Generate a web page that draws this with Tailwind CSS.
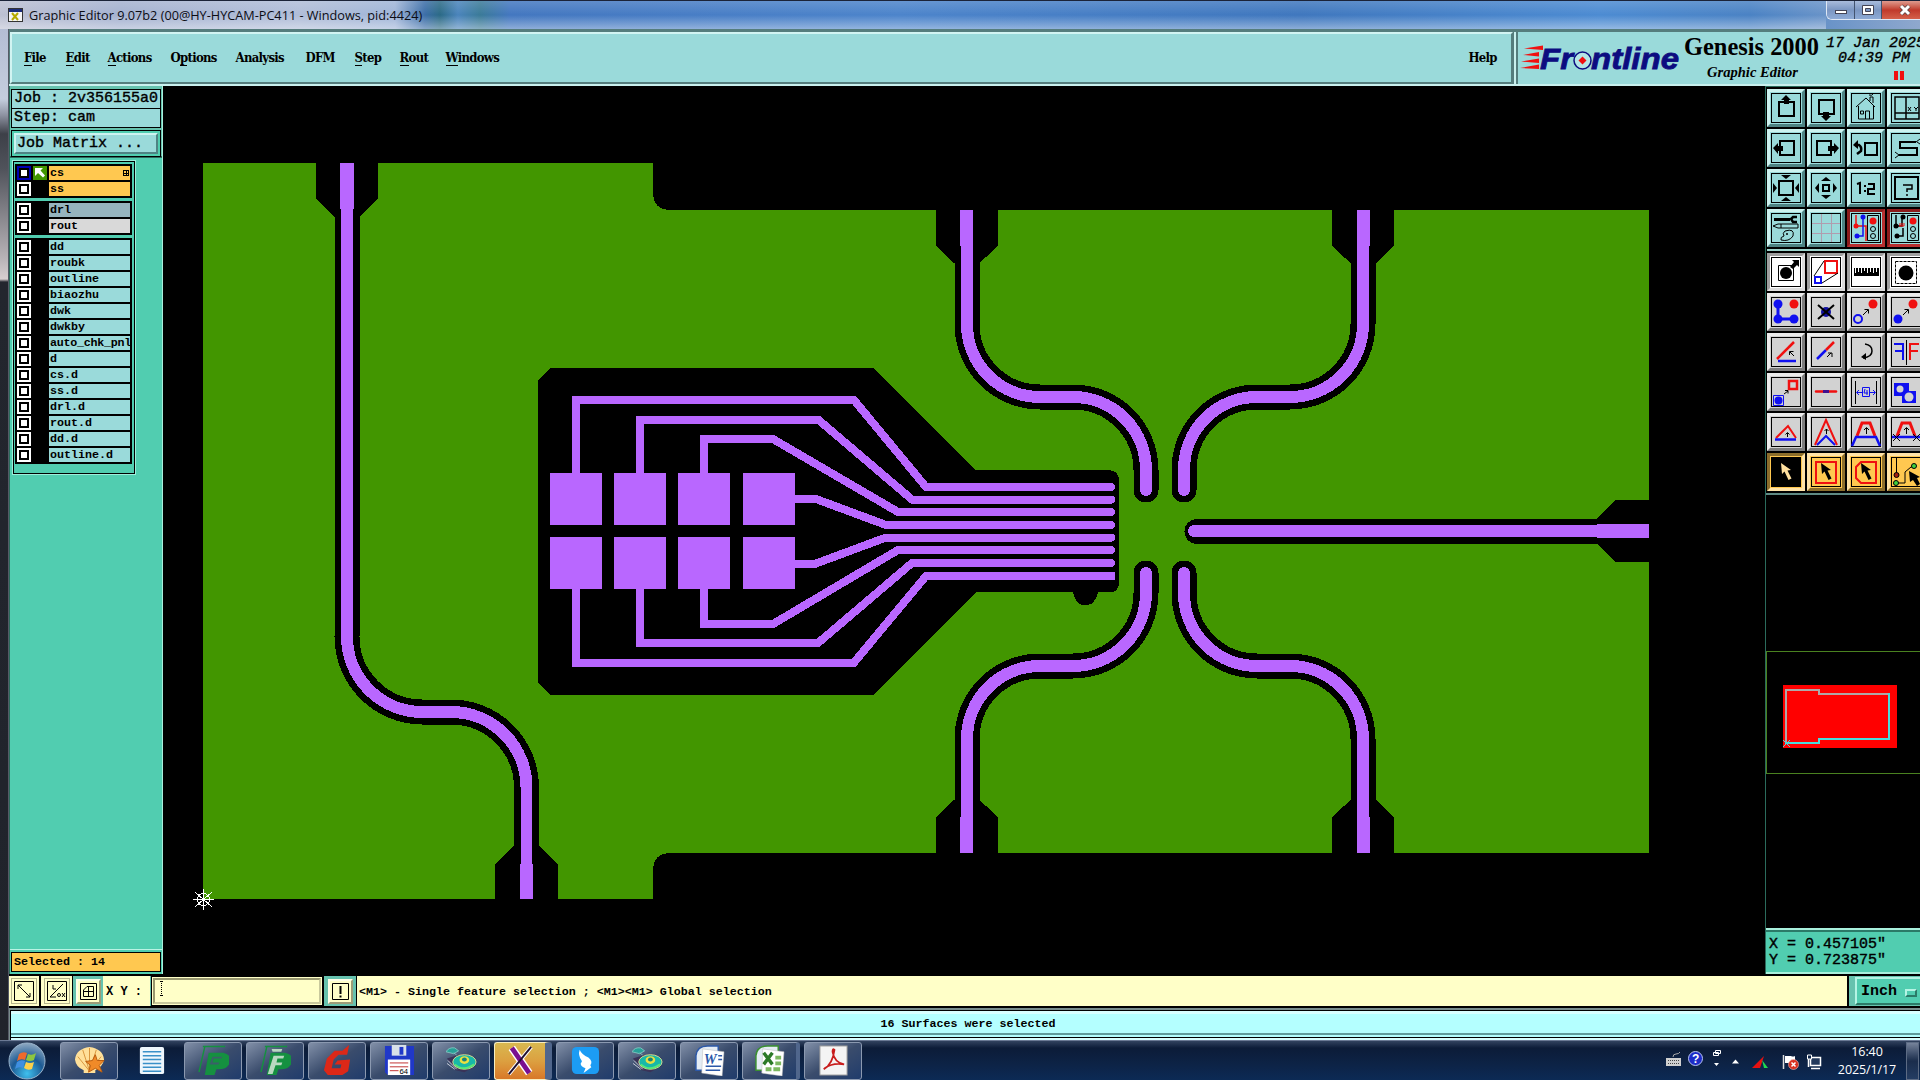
<!DOCTYPE html>
<html lang="en">
<head>
<meta charset="utf-8">
<title>Graphic Editor 9.07b2</title>
<script src="https://cdn.jsdelivr.net/npm/@tailwindcss/browser@4"></script>
</head>
<body class="w-[1920px] h-[1080px] overflow-hidden bg-black text-black flex flex-col">

<!-- title bar -->
<header class="h-[29px] shrink-0 flex items-start border-t border-[#1b2338] bg-[linear-gradient(90deg,#bcc0d2_0px,#a5b2d0_120px,#b0bdd8_300px,#a0b5d8_395px,#3c6ea8_425px,#2b6a86_440px,#4a84bc_458px,#3a7a98_480px,#4377c0_510px,#4c84cb_900px,#3f77be_1300px,#4c8bd2_1600px,#4a82c4_1750px,#8fa8cd_1920px)]">
  <div class="h-full flex-1 flex items-center pl-[8px] gap-[6px] bg-linear-to-b from-white/15 via-white/0 to-white/40">
    <svg class="w-[15px] h-[15px] shrink-0" viewBox="0 0 15 15"><rect x=".5" y=".5" width="14" height="13" fill="#f4f4f4" stroke="#333"/><rect x="1" y="1" width="13" height="3" fill="#1c2c7a"/><path d="M4 5l6 7M10 5l-6 7" stroke="#b5a800" stroke-width="2"/></svg>
    <span class="font-['Open_Sans',sans-serif] text-[12.7px] leading-[16px] whitespace-nowrap text-[#0c0c14]">Graphic Editor 9.07b2 (00@HY-HYCAM-PC411 - Windows, pid:4424)</span>
  </div>
  <div class="w-[94px] h-[19px] flex rounded-bl-md overflow-hidden border-l border-b border-[#dfe8f5]">
    <div class="w-[28px] border-r border-[#42536f] bg-linear-to-b from-[#a9bcdc] via-[#7b96c2] to-[#8eabd6] flex items-center justify-center"><svg width="14" height="14"><rect x="1.5" y="7.5" width="11" height="3" fill="#fff" stroke="#445"/></svg></div>
    <div class="w-[27px] border-r border-[#42536f] bg-linear-to-b from-[#a9bcdc] via-[#7b96c2] to-[#8eabd6] flex items-center justify-center"><svg width="14" height="14"><path d="M1.5 2.5h11v9h-11zM4.500 5.500v3h5v-3z" fill="#fff" fill-rule="evenodd" stroke="#445"/></svg></div>
    <div class="flex-1 bg-linear-to-b from-[#dd9a8e] via-[#c0392b] to-[#d4604a] flex items-center pl-[15px]"><svg width="16" height="14"><path d="M4 3l8 8M12 3l-8 8" stroke="#544" stroke-width="4.500"/><path d="M4 3l8 8M12 3l-8 8" stroke="#fff" stroke-width="3"/></svg></div>
  </div>
</header>

<div class="flex h-[1011px] shrink-0">
  <!-- window edge -->
  <div class="w-[9px] shrink-0 border-r border-[#555a66] bg-[linear-gradient(180deg,#b4bdd4_0px,#c5cede_70px,#8e93a2_86px,#3d4048_105px,#50535b_140px,#b9b4b8_230px,#d8cfd0_250px,#23262e_253px,#20232b_1011px)]"></div>

  <div class="flex-1 flex flex-col min-w-0">
    <!-- menu row -->
    <div class="h-[57px] flex bg-[#557d7d] pt-[3px] border-b-2 border-[#c9f0ee]">
      <nav class="w-[1503px] ml-[1px] shrink-0 bg-[#9adada] border-2 border-[#d2f4f2] border-b-[#557d7d] border-r-[#557d7d] flex items-center pl-[12px] font-['DejaVu_Serif_Condensed','DejaVu_Serif',serif] font-bold text-[13px] leading-[18px] tracking-[-0.7px]" id="menu"></nav>
      <div class="ml-[1px] flex-1 border-l-2 border-[#c9f0ee]">
        <div class="h-full border-l-2 border-[#557d7d] bg-[#9adada]">
          <svg class="block w-[402px] h-[52px]" viewBox="1518 32 402 52">
            <g fill="#f01010"><path d="M1524 48.500l19-3v4.500zM1523 55l16-3v4.500zM1521 61.500l18-3v4.500zM1520 68l19-3.500v4.500z"/></g>
            <g font-family="Liberation Sans, sans-serif" font-weight="bold" font-style="italic" font-size="30" fill="#0c0c80" stroke="#0c0c80" stroke-width=".8">
              <text x="1540" y="68.500" textLength="33" lengthAdjust="spacingAndGlyphs">Fr</text>
              <text x="1591" y="68.500" textLength="88" lengthAdjust="spacingAndGlyphs">ntline</text></g>
            <circle cx="1582.500" cy="60.500" r="8.500" fill="#b4e6e6" stroke="#0c0c80" stroke-width="1.500"/><path d="M1582.500 56.500l4 4-4 4-4-4z" fill="#f01010"/>
            <text x="1684" y="55" font-family="Liberation Serif, serif" font-weight="bold" font-size="25" textLength="135" lengthAdjust="spacingAndGlyphs">Genesis 2000</text>
            <text x="1707" y="77" font-family="Liberation Serif, serif" font-weight="bold" font-style="italic" font-size="15" textLength="91" lengthAdjust="spacingAndGlyphs">Graphic Editor</text>
            <g font-family="Liberation Mono, monospace" font-style="italic" font-size="15" stroke="#000" stroke-width=".35"><text x="1826" y="47">17 Jan 2025</text><text x="1838" y="62">04:39 PM</text></g>
            <path d="M1894 71h4v9h-4zM1900 71h4v9h-4z" fill="#f01010"/>
          </svg>
        </div>
      </div>
    </div>

    <!-- work area -->
    <div class="h-[888px] flex">
      <aside class="w-[154px] shrink-0 bg-[#51cdb0] flex flex-col border-l border-[#2b6b5c] border-r border-r-[#a9f0dd]">
        <div class="h-[72px] pt-[3px] pl-[1px] pr-[1px] border-b-2 border-[#2b6b5c] bg-[#66c2ae] font-['Liberation_Mono',monospace] text-[15px] leading-[18px] [-webkit-text-stroke:0.4px_black]">
          <div class="h-[20px] border border-black bg-[#9adada] pl-[2px] whitespace-pre">Job : 2v356155a0</div>
          <div class="h-[19px] border border-t-0 border-black bg-[#9adada] pl-[2px] whitespace-pre">Step: cam</div>
          <div class="mt-[2px] h-[27px] border border-black bg-[#51cdb0] p-[2px]">
            <div class="h-[21px] border-2 border-[#cdf3f0] border-r-[#4e8383] border-b-[#4e8383] bg-[#9adada] pl-[1px] leading-[17px] whitespace-pre">Job Matrix ...</div>
          </div>
        </div>
        <div class="pl-[3px] flex-1">
          <div class="w-[122px] mt-[3px] border border-black outline outline-1 outline-[#9ceedb] h-[313px] pt-[2px] pl-[1px] flex flex-col gap-[3px] font-['Liberation_Mono',monospace] font-bold text-[11.67px] leading-[14px]" id="layers"></div>
        </div>
        <div class="h-[25px] pt-[2px] pl-[1px] pr-[1px] border-t border-[#b9f3e4]">
          <div class="h-[20px] border border-black bg-[#ffc850] pl-[2px] font-['Liberation_Mono',monospace] font-bold text-[11.67px] leading-[18px] whitespace-pre">Selected : 14</div>
        </div>
      </aside>

      <!-- drawing canvas, in screen units -->
      <svg class="w-[1602px] h-[888px] shrink-0" viewBox="163 86 1602 888" shape-rendering="crispEdges">
        <path fill="#429600" d="M203 163H653V192Q653 210 671 210H1649V853H671Q653 853 653 871V899H203Z"/>
        <defs>
          <path id="quad" d="M967 210V324A73 73 0 0 0 1040 397H1073A73 73 0 0 1 1146 470V490"/>
          <path id="left" d="M347 163V636A75.500 75.500 0 0 0 422.500 712H451A75.500 75.500 0 0 1 526.500 787V899"/>
        </defs>
        <path d="M316 163H378V198L359 217H334L316 198ZM495 899V864L514 846H539L558 864V899Z"/>
        <use href="#left" fill="none" stroke="#000" stroke-width="25"/>
        <use href="#left" fill="none" stroke="#b967ff" stroke-width="12"/>
        <path fill="#b967ff" d="M340 163h14v46h-14zM520 864h13v35h-13z"/>
        <g id="top">
          <g id="tl">
            <path d="M936 210H998V246L979.500 263H954L936 246Z"/>
            <use href="#quad" fill="none" stroke="#000" stroke-width="25" stroke-linecap="round"/>
            <use href="#quad" fill="none" stroke="#b967ff" stroke-width="12" stroke-linecap="round"/>
            <path fill="#b967ff" d="M960 210h13v36h-13z"/>
          </g>
          <use href="#tl" transform="translate(2330 0) scale(-1 1)"/>
        </g>
        <rect x="930" y="190" width="500" height="20"/>
        <use href="#top" transform="translate(0 1063) scale(1 -1)"/>
        <rect x="930" y="853" width="500" height="20"/>
        <path d="M1649 500H1615L1597 519H1197A12.500 12.500 0 0 0 1197 544H1597L1615 562H1649Z"/>
        <path fill="#b967ff" d="M1649 524H1597V525H1194A6 6 0 0 0 1194 537H1597V538H1649Z"/>
        <path d="M538 380L550 368H873L976 470H1109Q1119 471 1119 480V583Q1119 592 1110 592H1098Q1095 605 1087 605H1082Q1075 603 1073 592H976L874 695H550L538 683Z"/>
        <path fill="#b967ff" d="M550 473h52v52h-52zM614 473h52v52h-52zM678 473h52v52h-52zM743 473h52v52h-52zM550 537h52v52h-52zM614 537h52v52h-52zM678 537h52v52h-52zM743 537h52v52h-52z"/>
        <g fill="none" stroke="#b967ff" stroke-width="8">
          <path d="M576 475V400H854L926 487H1112M640 475V419.500H818L912 499.500H1112M704 475V439H773L898 512H1112M793 499H816L886 525H1112M793 563.500H816L886 537.500H1112M704 588V624H773L898 550H1112M640 588V643H818L912 563H1112M576 588V662.500H854L926 576H1115"/>
          <path stroke-linecap="round" d="M1100 487h11M1100 499.500h11M1100 512h11M1100 525h11M1100 537.500h11M1100 550h11M1100 563h11"/>
        </g>
        <g stroke="#fff" fill="none"><path d="M193 899.500h21M203.500 889v21M195 892l17 15M212 892l-17 15"/><circle cx="203.500" cy="899.500" r="6"/></g>
      </svg>

      <!-- right column -->
      <aside class="w-[155px] shrink-0 border-l border-[#2b6b5c] flex flex-col">
        <div class="h-[409px] border-t border-[#2b6b5c] border-b-2 border-b-[#5f8a84] pl-[1px] pt-[2px]">
          <div class="grid grid-cols-[repeat(4,38px)] gap-[2px] w-[200px]" id="tools1"></div>
          <div class="h-[2px] my-[2px] bg-[#9ed4cc]"></div>
          <div class="grid grid-cols-[repeat(4,38px)] gap-[2px] w-[200px]" id="tools2"></div>
        </div>
        <svg class="block w-[154px] h-[433px]" viewBox="1766 495 154 433" shape-rendering="crispEdges">
          <path d="M1766.500 651.500H1921V773.500H1766.500Z" fill="none" stroke="#4a8220"/>
          <rect x="1783" y="685" width="114" height="63" fill="#ff0000"/>
          <path d="M1786 743V690H1819V694H1889" fill="none" stroke="#b0a8a8" stroke-width="2"/>
          <path d="M1889 693V739H1819V743H1785" fill="none" stroke="#48dcdc" stroke-width="2"/>
          <path d="M1783 740l7 7M1790 740l-7 7" stroke="#48dcdc"/>
        </svg>
        <div class="h-[46px] border-t-2 border-[#a9f0dd] border-b-2 bg-[#51cdb0] shadow-[inset_0_2px_#2b7a68] pt-[7px] pl-[3px] font-['Liberation_Mono',monospace] text-[15px] leading-[15.500px] whitespace-pre [-webkit-text-stroke:0.4px_black]"><div>X = 0.457105"</div><div>Y = 0.723875"</div></div>
      </aside>
    </div>

    <!-- command line -->
    <div class="h-[34px] border-y-2 border-black flex bg-[#ffffc8] font-['Liberation_Mono',monospace] font-bold text-[11.67px]">
      <div class="w-[32px] flex items-center justify-center border-r-2 border-black"><div class="size-[26px] border border-[#b5b58d] flex items-center justify-center"><svg width="20" height="20" fill="none" stroke="#000"><path d="M.5 .5h19v19h-19zM4 4l12 12M4 8V4h4M12 16h4v-4"/></svg></div></div>
      <div class="w-[32px] flex items-center justify-center border-r border-black"><div class="size-[26px] border border-[#b5b58d] flex items-center justify-center"><svg width="20" height="20" fill="none" stroke="#000"><path d="M.5 .5h19v19h-19zM3 16L16 3M6 4v4h3M3 16h6"/><circle cx="12" cy="14" r="1.500"/><path d="M15 12l3 4M18 12l-3 4"/></svg></div></div>
      <div class="w-[30px] bg-[#66c2ae] flex items-center justify-center"><div class="size-[25px] bg-[#ffffc8] border-2 border-[#ffffe8] border-r-[#9c9c78] border-b-[#9c9c78] flex items-center justify-center"><svg width="17" height="17" fill="none" stroke="#000"><path d="M.5 .5h16v16h-16zM8.500 3v11M3 8.500h11M7 3.500h6.500v10h-10V7z"/></svg></div></div>
      <div class="w-[48px] pl-[3px] leading-[32px] text-[12px] whitespace-pre border-r border-[#66c2ae]">X Y :</div>
      <div class="w-[172px] border border-black p-[1px]"><div class="h-full border-2 border-[#98986f] border-r-[#c9c99d] border-b-[#c9c99d] pl-[5px] pt-[1px]"><svg class="block" width="4" height="16"><path d="M1.500 0v15" stroke="#000" stroke-dasharray="1 1"/><path d="M0 .5h1M2 .5h1M0 14.500h1M2 14.500h1" stroke="#000"/></svg></div></div>
      <div class="w-[34px] bg-[#66c2ae] border-x border-black flex items-center justify-center"><div class="size-[25px] bg-[#ffffc8] border-2 border-[#ffffe8] border-r-[#9c9c78] border-b-[#9c9c78] flex items-center justify-center"><svg width="17" height="17"><path d="M.5 .5h16v16h-16z" fill="none" stroke="#000"/><path d="M7.500 3h2v8h-2zM7.500 12.500h2v2h-2z"/></svg></div></div>
      <div class="flex-1 pl-[2px] leading-[32px] whitespace-pre">&lt;M1&gt; - Single feature selection ; &lt;M1&gt;&lt;M1&gt; Global selection</div>
      <div class="w-[73px] border-l-2 border-black bg-[#66c2ae] pl-[6px] pt-[1px]"><div class="h-[28px] w-[80px] bg-[#51cdb0] border-2 border-[#b4f4e4] border-b-[#2b7a68] flex items-center pl-[4px] pt-[3px] gap-[8px] text-[15px]"><span>Inch</span><i class="w-[12px] h-[8px] border-2 border-[#b4f4e4] border-b-[#2b7a68] border-r-[#2b7a68]"></i></div></div>
    </div>
    <!-- status bar -->
    <div class="h-[32px] bg-[#788c8c] pt-[2px] pl-[1px]">
      <div class="h-full bg-[#b4ffff] border-t border-l border-black shadow-[inset_0_3px_#d8ffff] flex flex-col">
        <div class="h-[22px] text-center leading-[27px] font-['Liberation_Mono',monospace] font-bold text-[11.67px]"><span class="pl-[5px]">16 Surfaces were selected</span></div>
        <div class="h-[2px] bg-[#5f9c9c]"></div><div class="h-[2px]"></div><div class="h-px bg-black"></div><div class="h-[2px] bg-[#d8ffff]"></div>
      </div>
    </div>
  </div>
</div>

<!-- taskbar -->
<footer class="h-[40px] shrink-0 flex items-center border-t border-[#6b7a95] bg-[linear-gradient(180deg,#32435f_0,#0c1c38_18%,#0d2346_60%,#0c2a55_100%)]">
  <div class="w-[60px] flex justify-start pl-[8px]">
    <svg width="38" height="38" viewBox="0 0 38 38"><defs><radialGradient id="orb" cx=".5" cy=".85" r=".9"><stop offset="0" stop-color="#3fc0ee"/><stop offset=".5" stop-color="#1c5a94"/><stop offset="1" stop-color="#9fb4c8"/></radialGradient></defs><circle cx="19" cy="19" r="18" fill="url(#orb)" stroke="#9ab4cc"/><path d="M11 12q4-3 8-1l-2 7q-4-2-8 1z" fill="#ee6a2c"/><path d="M20 12q4 2 8-1l-2 7q-4 2-8 0z" fill="#8dc63f"/><path d="M9 20q4-3 8-1l-2 7q-4-2-8 1z" fill="#3f8fe0"/><path d="M18 20q4 2 8 0l-2 7q-4 2-8-1z" fill="#fcd04a"/></svg>
  </div>
  <div class="flex gap-[4px]" id="tasks"></div>
  <div class="flex-1"></div>
  <svg class="shrink-0" width="160" height="38" viewBox="1662 1041 160 38">
    <rect x="1666" y="1057" width="15" height="8" fill="#d0d0d0"/><path d="M1668 1059.500h11M1668 1062.500h11" stroke="#444" stroke-dasharray="1 1"/><path d="M1673 1056q0-3 3-3t4-2" stroke="#aaa" fill="none"/>
    <circle cx="1695.500" cy="1057.500" r="7" fill="#1c2cc8" stroke="#b8c4f0"/><text x="1692" y="1062" font-family="Liberation Sans, sans-serif" font-weight="bold" font-size="12" fill="#fff">?</text>
    <path d="M1715.500 1049.500h5v3h-5zM1713.500 1051.500h5v3h-5z" fill="#0d2346" stroke="#fff"/><path d="M1714 1062h5l-2.500 3zM1732 1062.500h7l-3.500-4z" fill="#fff"/>
    <path d="M1752 1067l12-12-4 12z" fill="#e81010"/><path d="M1762 1059l6 8h-4z" fill="#20d850"/>
    <path d="M1783.500 1054v14" stroke="#ddd" stroke-width="1.500"/><path d="M1785 1055h6q2 1 4 0v7h-10z" fill="#fff"/><circle cx="1793.500" cy="1063.500" r="5" fill="#d83020" stroke="#f0c0b8" stroke-width=".6"/><path d="M1791.500 1061.500l4 4M1795.500 1061.500l-4 4" stroke="#fff" stroke-width="1.500"/>
    <path d="M1810.500 1056.500h10v8h-10z" fill="#243a5c" stroke="#fff" stroke-width="1.500"/><path d="M1811 1067.500h9M1808.500 1054v12" stroke="#fff" stroke-width="1.500"/><path d="M1807.500 1054h4v4h-4z" fill="#0d2346" stroke="#fff"/>
  </svg>
  <div class="w-[84px] text-center text-white font-['Open_Sans',sans-serif] text-[12.500px] leading-[18px] pl-[6px] tracking-[-0.1px]"><div>16:40</div><div>2025/1/17</div></div>
  <div class="w-[13px] h-[38px] mr-[1px] border border-[#5c6b84] bg-linear-to-b from-[#76839a] via-[#1b2d4c] to-[#243d63]"></div>
</footer>

<script>
// menu entries: label, mnemonic index (-1 for none), slot width
const menu = [['File',0,41.5],['Edit',0,42],['Actions',0,63],['Options',1,65],['Analysis',-1,70],['DFM',-1,49],['Step',0,45],['Rout',0,46],['Windows',0,1023],['Help',-1,40]];
document.getElementById('menu').innerHTML = menu.map(([t,i,w]) =>
  `<span class="shrink-0" style="width:${w}px">${i < 0 ? t : t.slice(0,i) + '<span class="border-b border-black">' + t[i] + '</span>' + t.slice(i+1)}</span>`).join('');

const groups = [[['cs','#ffc850'],['ss','#ffc850']],[['drl','#96b4be'],['rout','#d9d9d9']],
  ['dd','roubk','outline','biaozhu','dwk','dwkby','auto_chk_pnl','d','cs.d','ss.d','drl.d','rout.d','dd.d','outline.d'].map(n => [n,'#9adada'])];
document.getElementById('layers').innerHTML = groups.map(g =>
  `<div class="w-[117px] bg-black p-[2px] flex flex-col gap-[2px]">` + g.map(([n,c]) => {
    const on = n === 'cs';
    return `<div class="h-[14px] flex gap-[2px]">
      <svg class="w-[14px] h-[14px] shrink-0" shape-rendering="crispEdges"><rect width="14" height="14" fill="${on ? '#0000b4' : '#fff'}"/><rect x="2" y="2" width="10" height="10"/><rect x="4" y="4" width="6" height="6" fill="#fff"/></svg>
      <svg class="w-[14px] h-[14px] shrink-0">${on ? '<rect width="14" height="14" fill="#429600"/><path d="M2 2h8L7.500 4.500l4.500 5-2 2-5-4.500L2 10z" fill="#fff"/>' : ''}</svg>
      <div class="w-[81px] overflow-hidden pl-[1px] flex items-center whitespace-pre" style="background:${c}"><span class="flex-1 ${n.length > 11 ? 'tracking-[-0.25px]' : ''}">${n}</span>${on ? '<svg class="w-[6px] h-[6px] mr-[1px] shrink-0" shape-rendering="crispEdges"><path d="M.5 .5h5v5h-5zM3 0v6M0 3h6" fill="none" stroke="#000"/></svg>' : ''}</div>
    </div>`; }).join('') + `</div>`).join('');

// tool buttons, 32x32 drawing area each
const K='stroke="#000" fill="none"', R='stroke="#f01010" fill="none"', B='stroke="#1010f0" fill="none"';
const cursor = c => `<path d="M11 7l1 11 2.500-2.500 4 8.500 3-1.500-4-8 3.500-.5z" fill="${c}"/>`;
const lights = '<path d="M17.500 3.500h11v25h-11z" fill="none" stroke="#000"/><circle cx="23" cy="9" r="3.500" fill="#f01010"/><circle cx="23" cy="17" r="2.500" fill="none" stroke="#000"/><circle cx="23" cy="24" r="2.500" fill="none" stroke="#000"/>';
const t1 = [
 `<path ${K} stroke-width="2" d="M9 10h15v14H9z"/><path d="M16 3l5 5h-2v4h-5V8h-3z"/>`,
 `<path ${K} stroke-width="2" d="M9 8h15v14H9z"/><path d="M16 29l-5-5h2v-4h6v4h2z"/>`,
 `<path ${K} d="M6 15L16 6l9 9M8.500 14v13h15V14M15.500 27v-8h4v8M10.500 19h3v3h-3zM20 9V5h3v6M19 3q3 1 4-1"/>`,
 `<path ${K} stroke-width="1.500" d="M5 5h24v22H5zM16 5v22M5 21h24"/><path ${K} d="M18 15l3 4M21 15l-3 4M24 15l2 2 2-2M26 17v2"/>`,
 `<path ${K} stroke-width="2" d="M10 9h14v14H10z"/><path d="M3 16l5-5v3h5v5H8v3z"/>`,
 `<path ${K} stroke-width="2" d="M7 9h14v14H7z"/><path d="M29 16l-5-5v3h-6v5h6v3z"/>`,
 `<path ${K} stroke-width="2" d="M15 11h12v12H15z"/><path ${K} stroke-width="2.500" d="M5 13h4q3 2 2 6l-4 3"/><path d="M3 13l5-5v9z"/>`,
 `<path ${K} stroke-width="2" d="M26 10H10v6h17v7H9"/><path ${K} d="M26 10l4-3M27 10l3 2M9 23l-4-3M9 23l-4 3"/>`,
 `<path ${K} stroke-width="2" d="M9 9h14v14H9z"/><path d="M16 7l-5-4h10zM16 25l-5 4h10zM7 16l-4-5v10zM25 16l4-5v10z"/>`,
 `<path ${K} stroke-width="2" d="M13 13h6v6h-6z"/><path d="M16 5l5 4H11zM16 27l5-4H11zM5 16l4-5v10zM27 16l-4-5v10z"/>`,
 `<path ${K} stroke-width="2" d="M7 12l3-1v11M15 13v2M15 18v2M18 12h6v5h-6v5h7"/>`,
 `<path ${K} stroke-width="2" d="M5 5h23v22H5z"/><path ${K} stroke-width="1.500" d="M13 13h9v4h-5v3M17 22v2"/>`,
 `<path d="M4 6h16v3H4z"/><path ${K} stroke-width="2.500" d="M27 5h-4l-2 2 2 3h4"/><path ${K} d="M3 14l5-2h20v4H8zM11 12v4M15 19q10-3 8 5-4 6-12 4-1-3 3-4-2-3 1-5z"/><circle cx="17" cy="22" r="1"/>`,
 `<path d="M11.500 2v28M21.500 2v28M2 11.500h28M2 21.500h28" stroke="#b09cae" fill="none"/>`,
 `<path ${R} stroke-width="1.500" d="M6 3v11h10v15"/><circle cx="6" cy="14" r="2.500" fill="#f01010"/><path ${B} stroke-width="1.500" d="M13 5v19H7"/><circle cx="13" cy="5" r="2.500" fill="#1010f0"/><circle cx="7" cy="24" r="2.500" fill="#1010f0"/>`+lights,
 `<path ${K} stroke-width="1.500" d="M6 3v11h6V5M13 16v8H7"/><path ${R} d="M9 14h5M10 14v-3M12 14v-3M14 14v-3"/><circle cx="6" cy="14" r="2.500"/><circle cx="13" cy="5" r="2.500"/><circle cx="7" cy="24" r="2.500"/>`+lights];
const t2 = [
 `<path ${K} d="M8.500 9.500h15v15h-15z"/><circle cx="16" cy="17" r="6"/><path d="M20 11l4-5-2-2h7v7l-2-2-4 4z"/>`,
 `<path ${R} stroke-width="2" d="M15 5h12v12H15z"/><path ${B} stroke-width="2" d="M5 21h6v6H5z"/><path ${K} d="M4 20L14 5M12 27l16-10"/>`,
 `<path d="M4 12h25v8H4z"/><path d="M5.500 12v5M8.500 12v4M11.500 12v5M14.500 12v3M17.500 12v5M20.500 12v4M23.500 12v5M26.500 12v4" stroke="#fff"/>`,
 `<circle cx="16" cy="17" r="7.500"/><path ${K} stroke-dasharray="3 1" d="M5.500 5.500h21v22h-21z"/>`,
 `<path ${B} stroke-width="3" d="M8 8v15h15"/><g fill="#1010f0"><circle cx="8" cy="8" r="4.500"/><circle cx="8" cy="23" r="4.500"/><circle cx="24" cy="23" r="4.500"/></g><circle cx="24" cy="8" r="4.500" fill="#f01010"/>`,
 `<circle cx="16" cy="16" r="5" fill="#1010a0"/><path ${K} stroke-width="2" d="M8 9l16 14M24 9L8 23"/>`,
 `<circle cx="8" cy="23" r="4" stroke-width="2" ${B}/><circle cx="23" cy="8" r="4.500" fill="#f01010"/><path ${K} d="M13 19l5-5M14.500 13.500h4v4"/>`,
 `<circle cx="8" cy="23" r="4.500" fill="#1010f0"/><circle cx="23" cy="8" r="4.500" fill="#f01010"/><path ${K} d="M13 19l5-5M14.500 13.500h4v4"/>`,
 `<path ${R} stroke-width="2.500" d="M7 23L24 6"/><path ${B} stroke-width="2.500" d="M8 25h18"/><path ${K} d="M24 20l-4-4M19.500 19v-3.500h4"/>`,
 `<path ${B} stroke-width="2.500" d="M7 23l9-9"/><path ${R} stroke-width="2.500" d="M16 14l8-8"/><path ${K} d="M17 21l4-4M18 17h4v4"/>`,
 `<path ${K} stroke-width="1.500" d="M15 8q7 1 7 7t-9 7"/><path d="M11 21l5-4v7z"/>`,
 `<path ${K} d="M16.500 4v25"/><path ${B} stroke-width="2" d="M4 8h9v16M5 15h8"/><path ${R} stroke-width="2" d="M29 8h-9v16M20 15h8"/>`,
 `<path ${R} stroke-width="2.500" d="M19 5h8v8h-8z"/><path ${B} d="M3.500 19.500h10v10h-10z"/><circle cx="8.500" cy="24.500" r="4" fill="#1010f0"/><path ${K} d="M14 18l4-3M15 14.500h3v3"/>`,
 `<path ${R} stroke-width="2.500" stroke-linecap="round" d="M6 15.500h20"/><path stroke="#401090" stroke-width="3" d="M13 15.500h6"/>`,
 `<path ${K} d="M5.500 5v23M26.500 5v23"/><path ${B} d="M12.500 11.500h7v9h-7zM7 16.500h5M20 16.500h5M9 14l-2.500 2.500L9 19M23 14l2.500 2.500L23 19M15 13l-1 4h4M17 14v5"/>`,
 `<path d="M4 7h15v8h7v12H12v-7H4z" fill="#1010f0"/><circle cx="10" cy="13" r="3.500" fill="#d2d2d2"/><circle cx="19" cy="21" r="4.500" fill="#d2d2d2"/>`,
 `<path ${R} stroke-width="2" d="M6 22L18 10l8 12"/><path ${B} stroke-width="2.500" d="M5 23.500h21"/><path ${K} d="M17.500 21v-4M15.500 18.500l2-2 2 2"/>`,
 `<path ${R} stroke-width="2" d="M5 29L16 4l11 25"/><path ${B} stroke-width="2" d="M7 29l9-9 9 9"/><path ${K} d="M16.500 18v-5M14.500 15l2-2 2 2"/>`,
 `<path ${R} stroke-width="3" d="M7 20l5-13h8l5 13"/><path ${B} stroke-width="2.500" d="M2 30l4-9h20l4 9"/><path ${K} d="M16.500 18v-6M14 14l2.500-2.500L19 14"/>`,
 `<path ${R} stroke-width="3" d="M7 20l5-13h8l5 13"/><path ${B} stroke-width="2.500" d="M2 21h28"/><path ${K} d="M16.500 18v-6M14 14l2.500-2.500L19 14M3 18l7 7M10 18l-7 7M23 18l7 7M30 18l-7 7"/>`,
 `<rect x="2" y="2" width="28" height="28"/>`+cursor('#ffe0a0'),
 `<path ${R} stroke-width="2" d="M6 6h20v21H6z"/>`+cursor('#000'),
 `<path ${R} stroke-width="2" d="M11 6h15v21H11l-5-5V11z"/>`+cursor('#000'),
 `<path ${K} d="M6.500 2v16M7 27h8V16l6-5h4"/><circle cx="6.500" cy="19" r="2.500" fill="#a02010" stroke="#000"/><circle cx="6" cy="27" r="2.500" fill="#40d040" stroke="#000"/><circle cx="24" cy="10" r="2.500" fill="#40d040" stroke="#000"/><path d="M19 15l1 11 3-2 4 6 3-2-3-6 3-1z"/>`];
const skins = {
  teal: 'bg-[#9adada] border-[#cdf3f0] border-r-[#4e8383] border-b-[#4e8383]',
  red: 'bg-[#9adada] border-[#8c1c1c] border-r-[#b83030] border-b-[#b83030]',
  white: 'bg-white border-[#a0a0a0] border-r-[#dcdcdc] border-b-[#dcdcdc]',
  gray: 'bg-[#d2d2d2] border-[#ececec] border-r-[#7e7e7e] border-b-[#7e7e7e]',
  amber: 'bg-[#ffc850] border-[#ffe3a8] border-r-[#8c6e2c] border-b-[#8c6e2c]',
  amberIn: 'bg-[#ffc850] border-[#8c6e2c] border-r-[#ffe3a8] border-b-[#ffe3a8]'};
const btn = (art, skin) => `<div class="w-[38px] h-[38px] border-[3px] ${skins[skin]}"><svg class="block" width="32" height="32" viewBox="0 0 32 32"><rect x="1.500" y="1.500" width="29" height="29" fill="none" stroke="#000"/>${art}</svg></div>`;
document.getElementById('tools1').innerHTML = t1.map((a,i) => btn(a, i > 13 ? 'red' : 'teal')).join('');
document.getElementById('tools2').innerHTML = t2.map((a,i) => btn(a, i < 4 ? 'white' : i < 20 ? 'gray' : i === 20 ? 'amberIn' : 'amber')).join('');

// taskbar buttons: frame style, 32x32 art
const pads = `<path d="M0 7q3-5 9-4l4 3-5 3zM8 8l6 5" fill="#28a098" stroke="#8cd0c8" stroke-width=".8"/><path d="M1 14l12-4 17 3v9l-11 6-9-2z" fill="#3a3358"/><ellipse cx="19" cy="17.500" rx="12" ry="7.500" fill="#18b8a8" stroke="#d8d890"/><path d="M9 20q9 8 20 0" stroke="#58e878" stroke-width="2" fill="none"/><ellipse cx="19" cy="15.500" rx="5" ry="4" fill="#e8e040"/><ellipse cx="19" cy="15" rx="2.500" ry="2" fill="#158080"/><path d="M2 16l9 9M1 19l8 6" stroke="#c8ccd8"/>`;
const sheet = (c,t) => `<path d="M2 26V11Q3 1 14 1h11v6H12v19z" fill="#e4ecf4" stroke="${c}" stroke-width="1.500"/><path d="M9 4l22 3-2 25-21-3z" fill="#fff" stroke="#bbb" stroke-width=".5"/>${t}`;
const leafP = '<path d="M5 1.500h23M7 2L1 28" stroke="#159040" stroke-width="1.500" fill="none"/><path d="M11 8h15q9 2 7 10-3 8-14 7l-2 6H7z" fill="#159040"/>';
const task = [
 ['f','<path d="M16 2Q2 4 1 15q1 8 9 11v3h12v-3q8-4 9-11Q30 4 16 2z" fill="#ffe09a"/><path d="M16 27L4 12M16 27L9 5M16 27V3M16 27l7-22M16 27l12-15" stroke="#d8953c"/><path d="M22 10l2 6 7 0-5 5 3 7-7-4-7 4 2-7-5-4 7-1z" fill="#f08a28" stroke="#b85c10"/>'],
 ['n','<rect x="4" y="2" width="25" height="28" rx="2" fill="#eef6fc"/><path d="M7 7h19M7 11h19M7 15h19M7 19h19M7 23h19M7 27h19" stroke="#3a90c8" stroke-width="1.500"/>'],
 ['f',leafP + '<path d="M15 12h10l-1 2h-8l-1 4h7l-1 2h-9z" fill="#3b6068"/>'],
 ['f',leafP + '<path d="M12 4h11l-1 3h-9zM14 11h11l-1 3h-6l-1 4h6l-1 3h-6l-3 9H8z" fill="#b8d8c0"/>'],
 ['f','<path d="M28 0l-7 6h-8L5 14 2 26l4 5h15l6-4 2-12-13 1-3 4h7l-1 4H10l2-9 5-5h9z" fill="#dc2818"/>'],
 ['f','<path d="M1 1h30v30H4l-3-3z" fill="#2038c8"/><rect x="8" y="0" width="15" height="11" fill="#d8e0e8"/><rect x="16" y="2" width="4" height="8" fill="#2038c8"/><rect x="4" y="15" width="23" height="16" fill="#fff"/><path d="M6 18.500h19M6 22.500h19M6 26.500h9" stroke="#c03030"/><text x="16" y="30" font-size="8" font-family="Liberation Sans, sans-serif">64</text>'],
 ['f',pads],
 ['a','<path d="M7 3l18 26" stroke="#fff" stroke-width="8"/><path d="M27 2L4 30" stroke="#fff" stroke-width="4"/><path d="M7 3l18 26" stroke="#7a1090" stroke-width="5"/><path d="M27 2L4 30" stroke="#201030" stroke-width="2"/>'],
 ['f','<rect x="2" y="2" width="28" height="28" rx="5" fill="#1c9cf4"/><path d="M10 5q2 5 9 8 5 4 2 8l1 2-8 6 2-5q-5-2-5-5 2-2 1-3-4-5-2-11z" fill="#fff"/>'],
 ['f',pads],
 ['f',sheet('#2c58a8','<text x="10" y="20" font-size="15" font-weight="bold" font-style="italic" font-family="Liberation Serif, serif" fill="#2c58a8">W</text><path d="M25 11h4M25 15h4M12 22h16M12 26h15" stroke="#2c58a8" stroke-width="1.500"/>')],
 ['s',sheet('#3a9030','<path d="M10 8l9 12M19 8l-9 12" stroke="#2c7a28" stroke-width="3.500"/><path d="M22 11h6v4h-6zM22 17h6v4h-6zM12 23h6v4h-6zM20 23h7v4h-7z" fill="#7cb860"/>')],
 ['f','<rect x="2" y="1" width="28" height="30" fill="#f4f4f4" stroke="#999"/><path d="M6 25q9-5 11-20-2-2-2 2 2 11 12 13-12-2-20 4z" fill="none" stroke="#c81c1c" stroke-width="1.800"/>']];
const frames = {
  f: 'border border-[#8b99b0] bg-linear-to-br from-[#8290a8] via-[#3a4c6c] to-[#203c6c]',
  n: 'border border-transparent',
  a: 'border border-[#f8eec0] border-r-[7px] border-r-[#50668c] bg-linear-to-b from-[#d8b850] via-[#dca040] to-[#d87828]',
  s: 'border border-[#8b99b0] border-r-[4px] border-r-[#50668c] bg-linear-to-br from-[#8290a8] via-[#3a4c6c] to-[#203c6c]'};
document.getElementById('tasks').innerHTML = task.map(([f,art]) =>
  `<div class="w-[58px] h-[38px] rounded-[3px] flex items-center justify-center ${frames[f]}"><svg width="31" height="31" viewBox="0 0 32 32">${art}</svg></div>`).join('');
</script>
</body>
</html>
